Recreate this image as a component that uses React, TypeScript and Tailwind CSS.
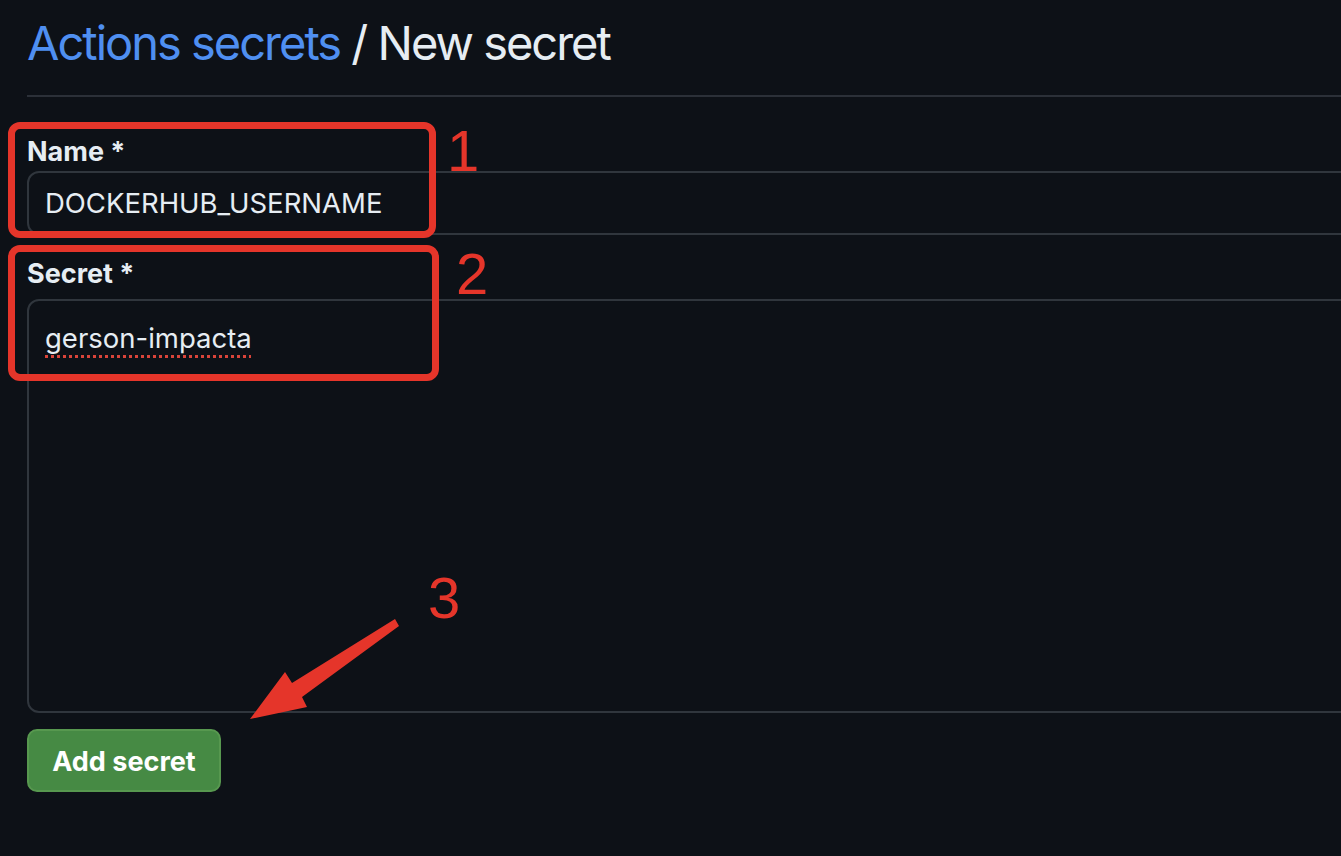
import * as React from "react";

const RED = "#e5352a";

function Arrow() {
  return (
    <svg className="absolute left-0 top-0" width="1341" height="856" viewBox="0 0 1341 856">
      <polygon
        fill={RED}
        points="395,619 399,626 302,697 307,707 250,719 285,672 292,683"
      />
    </svg>
  );
}

export default function App() {
  const [name, setName] = React.useState("DOCKERHUB_USERNAME");
  const [secret] = React.useState("gerson-impacta");

  return (
    <div
      className="relative h-[856px] w-full overflow-hidden bg-[#0d1117] text-[#e6edf3]"
      style={{ fontFamily: "Inter, 'Noto Sans', sans-serif" }}
    >
      <div className="flex flex-col pl-[27px]">
        <h2 className="mt-[13px] h-[60px] text-[47px] font-normal leading-[60px] tracking-[-2px]">
          <span className="text-[#4f8ff1]">Actions secrets</span>
          <span className="text-[#e6edf3]"> / New secret</span>
        </h2>
        <div className="mt-[22px] h-[2px] w-full bg-[#2b3038]" />

        <form className="flex flex-col" onSubmit={(e) => e.preventDefault()}>
          <label className="mt-[38px] text-[27px] font-bold leading-[34px] text-[#e6edf3]">Name *</label>
          <input
            value={name}
            onChange={(e) => setName(e.target.value)}
            className="mt-[2px] h-[64px] w-[calc(100%+24px)] rounded-[12px] border-2 border-[#30363d] bg-[#0d1117] px-[16px] text-[27.5px] text-[#e6edf3] outline-none"
          />

          <label className="mt-[22px] text-[27px] font-bold leading-[34px] text-[#e6edf3]">Secret *</label>
          <div className="mt-[8px] h-[414px] w-[calc(100%+24px)] rounded-[12px] border-2 border-[#30363d] bg-[#0d1117] px-[16px] pt-[20px]">
            <span className="text-[27.5px] leading-[34px] text-[#e6edf3] underline decoration-[#d9443a] decoration-dotted decoration-[3px] underline-offset-[7px]">
              {secret}
            </span>
          </div>

          <div className="mt-[16px]">
            <button
              type="submit"
              className="h-[63px] w-[194px] rounded-[10px] border-2 border-[#57984f] bg-[#468a44] pt-[3px] text-[27px] font-bold text-white"
            >
              Add secret
            </button>
          </div>
        </form>
      </div>

      {/* annotations */}
      <div className="absolute left-[8px] top-[122px] h-[116px] w-[428px] rounded-[12px] border-[7px] border-[#e5352a]" />
      <div className="absolute left-[8px] top-[245px] h-[136px] w-[431px] rounded-[12px] border-[7px] border-[#e5352a]" />
      <span
        className="absolute left-[447px] top-[118px] text-[58px] leading-[66px] text-[#e5352a]"
        style={{ fontFamily: "'Liberation Sans', Arial, sans-serif" }}
      >
        1
      </span>
      <span
        className="absolute left-[456px] top-[241px] text-[58px] leading-[66px] text-[#e5352a]"
        style={{ fontFamily: "'Liberation Sans', Arial, sans-serif" }}
      >
        2
      </span>
      <span
        className="absolute left-[428px] top-[565px] text-[58px] leading-[66px] text-[#e5352a]"
        style={{ fontFamily: "'Liberation Sans', Arial, sans-serif" }}
      >
        3
      </span>
      <Arrow />
    </div>
  );
}
